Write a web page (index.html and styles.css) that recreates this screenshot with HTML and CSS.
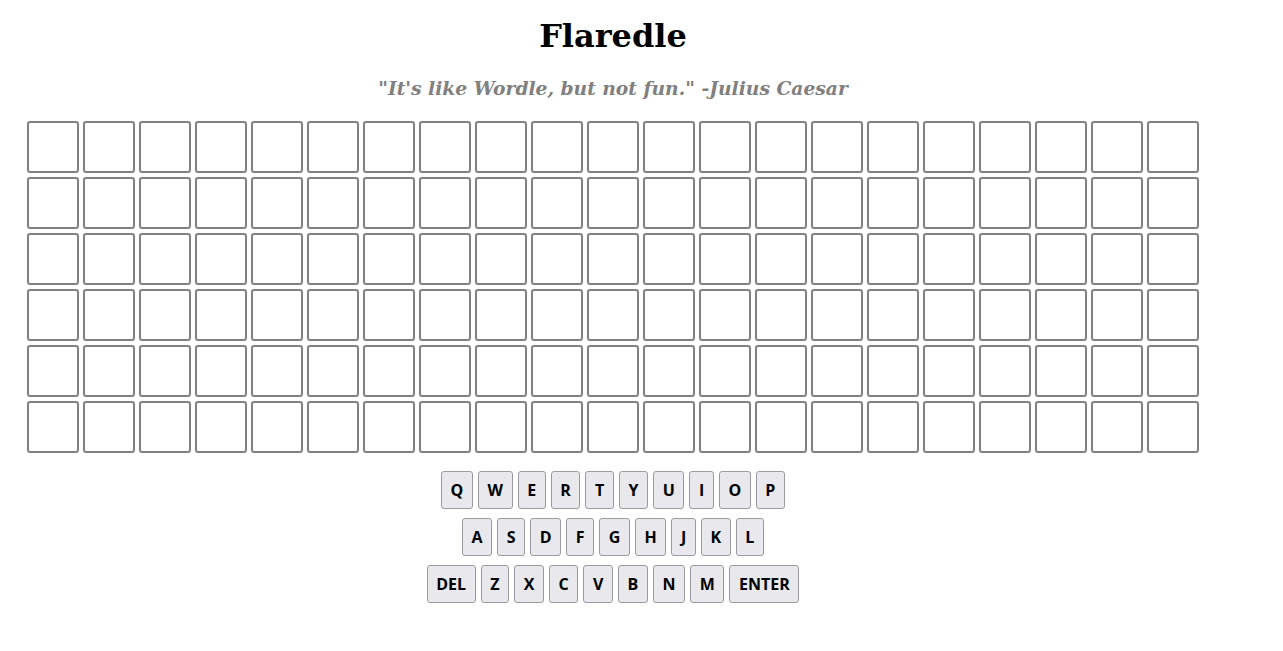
FILE: index.html
```html
<!DOCTYPE html>
<html>
<head>
<meta charset="utf-8">
<link rel="stylesheet" href="styles.css">
</head>
<body>
<div class="app">
  <h1 class="title">Flaredle</h1>
  <h3 class="subtitle">"It's like Wordle, but not fun." -Julius Caesar</h3>
  <div class="board" id="board"></div>
  <div class="keyboard">
    <div class="krow">
      <button class="key">Q</button><button class="key">W</button><button class="key">E</button><button class="key">R</button><button class="key">T</button><button class="key">Y</button><button class="key">U</button><button class="key">I</button><button class="key">O</button><button class="key">P</button>
    </div>
    <div class="krow">
      <button class="key">A</button><button class="key">S</button><button class="key">D</button><button class="key">F</button><button class="key">G</button><button class="key">H</button><button class="key">J</button><button class="key">K</button><button class="key">L</button>
    </div>
    <div class="krow">
      <button class="key">DEL</button><button class="key">Z</button><button class="key">X</button><button class="key">C</button><button class="key">V</button><button class="key">B</button><button class="key">N</button><button class="key">M</button><button class="key">ENTER</button>
    </div>
  </div>
</div>
<script>
  var b = document.getElementById('board');
  for (var i = 0; i < 126; i++) {
    var t = document.createElement('div');
    t.className = 'tile';
    b.appendChild(t);
  }
</script>
</body>
</html>
```
FILE: styles.css
```css
body {
  margin: 8px;
  background: #ffffff;
  font-family: "DejaVu Serif", serif;
}
.app {
  width: 1210px;
  display: flex;
  flex-direction: column;
  align-items: center;
}
.title {
  font-size: 32px;
  font-weight: bold;
  margin: 8px 0 0 0;
  line-height: 40px;
  color: #000;
}
.subtitle {
  font-size: 18.7px;
  font-style: italic;
  font-weight: bold;
  color: #808080;
  margin: 20px 0 0 0;
  line-height: 24px;
}
.board {
  margin-top: 21px;
  display: grid;
  grid-template-columns: repeat(21, 52px);
  grid-auto-rows: 52px;
  gap: 4px;
}
.tile {
  box-sizing: border-box;
  border: 2px solid #808080;
  border-radius: 3px;
}
.keyboard {
  margin-top: 18px;
  display: flex;
  flex-direction: column;
  align-items: center;
  gap: 9px;
}
.krow {
  display: flex;
  gap: 5px;
}
.key {
  box-sizing: border-box;
  height: 38px;
  padding: 0 8.6px;
  margin: 0;
  border: 1px solid #9a9aa0;
  border-radius: 3px;
  background: #e8e8ed;
  font-family: "Open Sans", sans-serif;
  font-weight: bold;
  font-size: 16px;
  color: #000;
}
```
